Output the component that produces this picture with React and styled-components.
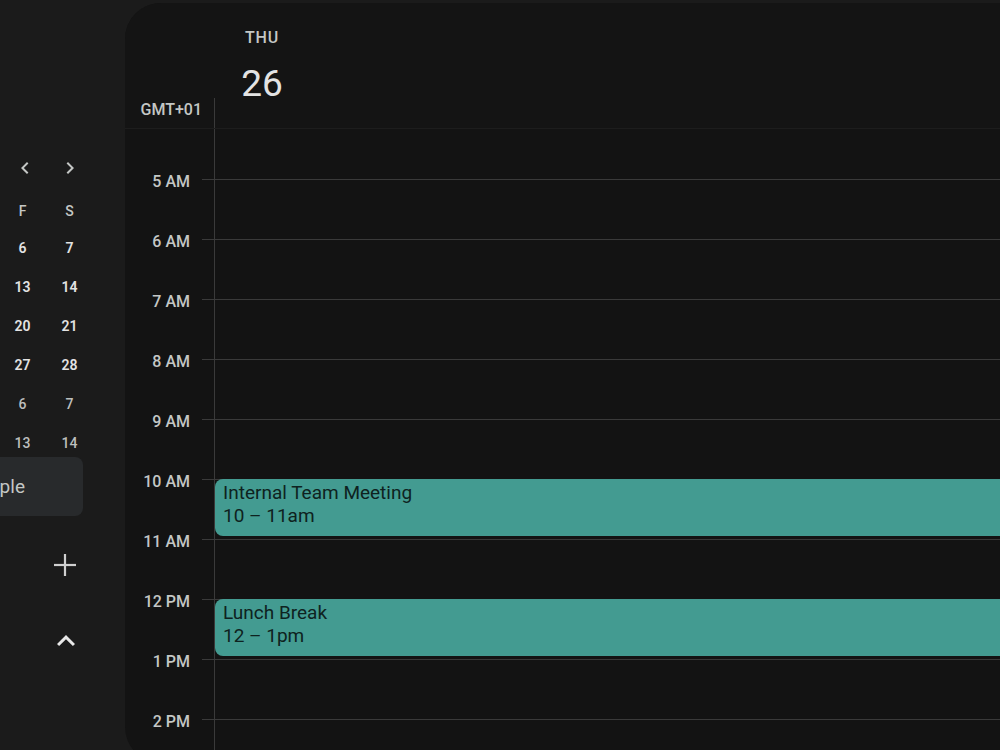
import React from "react";
import styled, { createGlobalStyle } from "styled-components";

const GlobalStyle = createGlobalStyle`
  html, body {
    margin: 0;
    padding: 0;
    background: #1b1b1b;
    overflow: hidden;
    font-family: Roboto, "Noto Sans", "Liberation Sans", sans-serif;
  }
  #root { width: 1000px; height: 750px; overflow: hidden; }
`;

const LINE = "#3a3a3a";
const HOUR_H = 60;
const FIRST_HOUR = 5;
const GRID_TOP = 50;

const Layout = styled.div`
  display: flex;
  width: 1000px;
  height: 750px;
  overflow: hidden;
  background: #1b1b1b;
`;

/* ---------- Sidebar ---------- */
const Sidebar = styled.aside`
  flex: 0 0 125px;
  width: 125px;
  display: flex;
  flex-direction: column;
  align-items: flex-end;
  padding-top: 148px;
  box-sizing: border-box;
  overflow: hidden;
`;

const MiniCal = styled.div`
  width: 94px;
  margin-right: 32px;
  display: flex;
  flex-direction: column;
  flex-shrink: 0;
`;

const NavRow = styled.div`
  height: 40px;
  display: flex;
  align-items: center;
  justify-content: flex-end;
`;

const NavButtons = styled.div`
  display: flex;
  gap: 13px;
  margin-right: 7px;
`;

const IconButton = styled.button`
  width: 32px;
  height: 32px;
  padding: 0;
  border: none;
  background: transparent;
  display: flex;
  align-items: center;
  justify-content: center;
  color: ${(p) => p.$color || "#c4c7c5"};
  cursor: pointer;
`;

const WeekdayRow = styled.div`
  height: 42px;
  padding-top: 3px;
  box-sizing: border-box;
  display: grid;
  grid-template-columns: repeat(2, 47px);
  align-items: center;
`;

const Weekday = styled.span`
  text-align: center;
  font-size: 14px;
  font-weight: 500;
  color: #c4c7c5;
`;

const DateGrid = styled.div`
  display: grid;
  grid-template-columns: repeat(2, 47px);
  grid-auto-rows: 36px;
  row-gap: 3px;
`;

const DateCell = styled.span`
  display: flex;
  align-items: center;
  justify-content: center;
  font-size: 14px;
  font-weight: ${(p) => (p.$muted ? 500 : 600)};
  color: ${(p) => (p.$muted ? "#bdbfbe" : "#e3e3e3")};
`;

const SearchBox = styled.div`
  width: 260px;
  height: 59px;
  margin-top: -4px;
  margin-right: 42px;
  flex-shrink: 0;
  border-radius: 0 8px 8px 0;
  background: #282a2c;
  display: flex;
  align-items: center;
  justify-content: flex-end;
  padding-right: 58px;
  box-sizing: border-box;
  overflow: hidden;
`;

const SearchText = styled.span`
  font-size: 19px;
  color: #c4c7c5;
  white-space: nowrap;
`;

const SideAction = styled(IconButton)`
  width: 40px;
  height: 40px;
  margin-top: ${(p) => p.$mt}px;
  margin-right: ${(p) => p.$mr}px;
`;

/* ---------- Main panel ---------- */
const Panel = styled.main`
  flex: 0 0 1000px;
  width: 1000px;
  height: 760px;
  margin-top: 3px;
  border-radius: 36px 0 0 36px;
  background: #131313;
  display: flex;
  flex-direction: column;
  overflow: hidden;
`;

const Header = styled.header`
  display: flex;
  flex-direction: column;
  background: #141414;
  border-bottom: 1px solid #1d1d1d;
`;

const HeaderTop = styled.div`
  height: 95px;
  display: flex;
  padding-left: 113px;
`;

const DayHead = styled.div`
  width: 48px;
  display: flex;
  flex-direction: column;
  align-items: center;
`;

const DayName = styled.span`
  margin-top: 25px;
  font-size: 16px;
  line-height: 20px;
  font-weight: 500;
  letter-spacing: 0.8px;
  color: #c4c7c5;
`;

const DayNumber = styled.span`
  margin-top: 14px;
  font-size: 37px;
  line-height: 44px;
  font-weight: 400;
  color: #e3e3e3;
`;

const AllDayRow = styled.div`
  height: 30px;
  display: flex;
`;

const GutterLabel = styled.div`
  width: 89px;
  box-sizing: border-box;
  padding: 3px 12px 0 0;
  text-align: right;
  font-size: 16px;
  line-height: 18px;
  font-weight: 500;
  color: #c4c7c5;
`;

const AllDayCell = styled.div`
  flex: 1;
  border-left: 1px solid ${LINE};
`;

const GridBody = styled.div`
  flex: 1;
  display: flex;
  overflow: hidden;
`;

const TimeGutter = styled.div`
  width: 89px;
  flex-shrink: 0;
  padding-top: ${GRID_TOP}px;
  display: flex;
  flex-direction: column;
`;

const HourRow = styled.div`
  height: ${HOUR_H}px;
  display: flex;
  flex-shrink: 0;
`;

const HourLabel = styled.span`
  width: 77px;
  box-sizing: border-box;
  padding-right: 12px;
  margin-top: -6px;
  text-align: right;
  font-size: 16px;
  line-height: 18px;
  height: 18px;
  font-weight: 500;
  color: #c4c7c5;
`;

const Tick = styled.span`
  width: 12px;
  border-top: 1px solid ${LINE};
`;

const DayColumn = styled.div`
  flex: 1;
  position: relative;
  border-left: 1px solid ${LINE};
  padding-top: ${GRID_TOP}px;
  display: flex;
  flex-direction: column;
`;

const Slot = styled.div`
  height: ${HOUR_H}px;
  flex-shrink: 0;
  box-sizing: border-box;
  border-top: 1px solid ${LINE};
`;

const EventCard = styled.div`
  position: absolute;
  left: 0;
  right: 12px;
  top: ${(p) => p.$top}px;
  height: ${(p) => p.$height}px;
  box-sizing: border-box;
  padding: 2px 8px 0;
  border-radius: 8px;
  background: #439b91;
  color: #0e2220;
  font-size: 19px;
  line-height: 23px;
  overflow: hidden;
`;

const EventTitle = styled.div`
  white-space: nowrap;
`;

const EventTime = styled.div`
  white-space: nowrap;
`;

/* ---------- Icons ---------- */
const ChevronLeft = () => (
  <svg width="24" height="24" viewBox="0 0 24 24" fill="currentColor">
    <path d="M15.41 7.41L14 6l-6 6 6 6 1.41-1.41L10.83 12z" />
  </svg>
);
const ChevronRight = () => (
  <svg width="24" height="24" viewBox="0 0 24 24" fill="currentColor">
    <path d="M8.59 16.59L10 18l6-6-6-6-1.41 1.41L13.17 12z" />
  </svg>
);
const PlusIcon = () => (
  <svg width="24" height="24" viewBox="0 0 24 24" fill="none" stroke="currentColor" strokeWidth="2.2">
    <line x1="1" y1="12" x2="23" y2="12" />
    <line x1="12" y1="1" x2="12" y2="23" />
  </svg>
);
const ChevronUp = () => (
  <svg width="36" height="36" viewBox="0 0 24 24" fill="currentColor">
    <path d="M12 8l-6 6 1.41 1.41L12 10.83l4.59 4.58L18 14z" />
  </svg>
);

/* ---------- Data ---------- */
const weekdays = ["F", "S"];
const weeks = [
  { f: 6, s: 7, muted: false },
  { f: 13, s: 14, muted: false },
  { f: 20, s: 21, muted: false },
  { f: 27, s: 28, muted: false },
  { f: 6, s: 7, muted: true },
  { f: 13, s: 14, muted: true },
];
const hours = ["5 AM", "6 AM", "7 AM", "8 AM", "9 AM", "10 AM", "11 AM", "12 PM", "1 PM", "2 PM"];
const events = [
  { title: "Internal Team Meeting", time: "10 – 11am", start: 10, end: 11 },
  { title: "Lunch Break", time: "12 – 1pm", start: 12, end: 13 },
];

export default function App() {
  return (
    <>
      <GlobalStyle />
      <Layout>
        <Sidebar>
          <MiniCal>
            <NavRow>
              <NavButtons>
                <IconButton aria-label="Previous month"><ChevronLeft /></IconButton>
                <IconButton aria-label="Next month"><ChevronRight /></IconButton>
              </NavButtons>
            </NavRow>
            <WeekdayRow>
              {weekdays.map((w, i) => (
                <Weekday key={i}>{w}</Weekday>
              ))}
            </WeekdayRow>
            <DateGrid>
              {weeks.map((w, i) => (
                <React.Fragment key={i}>
                  <DateCell $muted={w.muted}>{w.f}</DateCell>
                  <DateCell $muted={w.muted}>{w.s}</DateCell>
                </React.Fragment>
              ))}
            </DateGrid>
          </MiniCal>
          <SearchBox>
            <SearchText>Search for people</SearchText>
          </SearchBox>
          <SideAction $mt={29} $mr={40} $color="#d0d0d0" aria-label="Add"><PlusIcon /></SideAction>
          <SideAction $mt={36} $mr={39} $color="#e8e8e8" aria-label="Collapse"><ChevronUp /></SideAction>
        </Sidebar>
        <Panel>
          <Header>
            <HeaderTop>
              <DayHead>
                <DayName>THU</DayName>
                <DayNumber>26</DayNumber>
              </DayHead>
            </HeaderTop>
            <AllDayRow>
              <GutterLabel>GMT+01</GutterLabel>
              <AllDayCell />
            </AllDayRow>
          </Header>
          <GridBody>
            <TimeGutter>
              {hours.map((h) => (
                <HourRow key={h}>
                  <HourLabel>{h}</HourLabel>
                  <Tick />
                </HourRow>
              ))}
            </TimeGutter>
            <DayColumn>
              {hours.map((h) => (
                <Slot key={h} />
              ))}
              {events.map((e) => (
                <EventCard
                  key={e.title}
                  $top={GRID_TOP + (e.start - FIRST_HOUR) * HOUR_H}
                  $height={(e.end - e.start) * HOUR_H - 3}
                >
                  <EventTitle>{e.title}</EventTitle>
                  <EventTime>{e.time}</EventTime>
                </EventCard>
              ))}
            </DayColumn>
          </GridBody>
        </Panel>
      </Layout>
    </>
  );
}
